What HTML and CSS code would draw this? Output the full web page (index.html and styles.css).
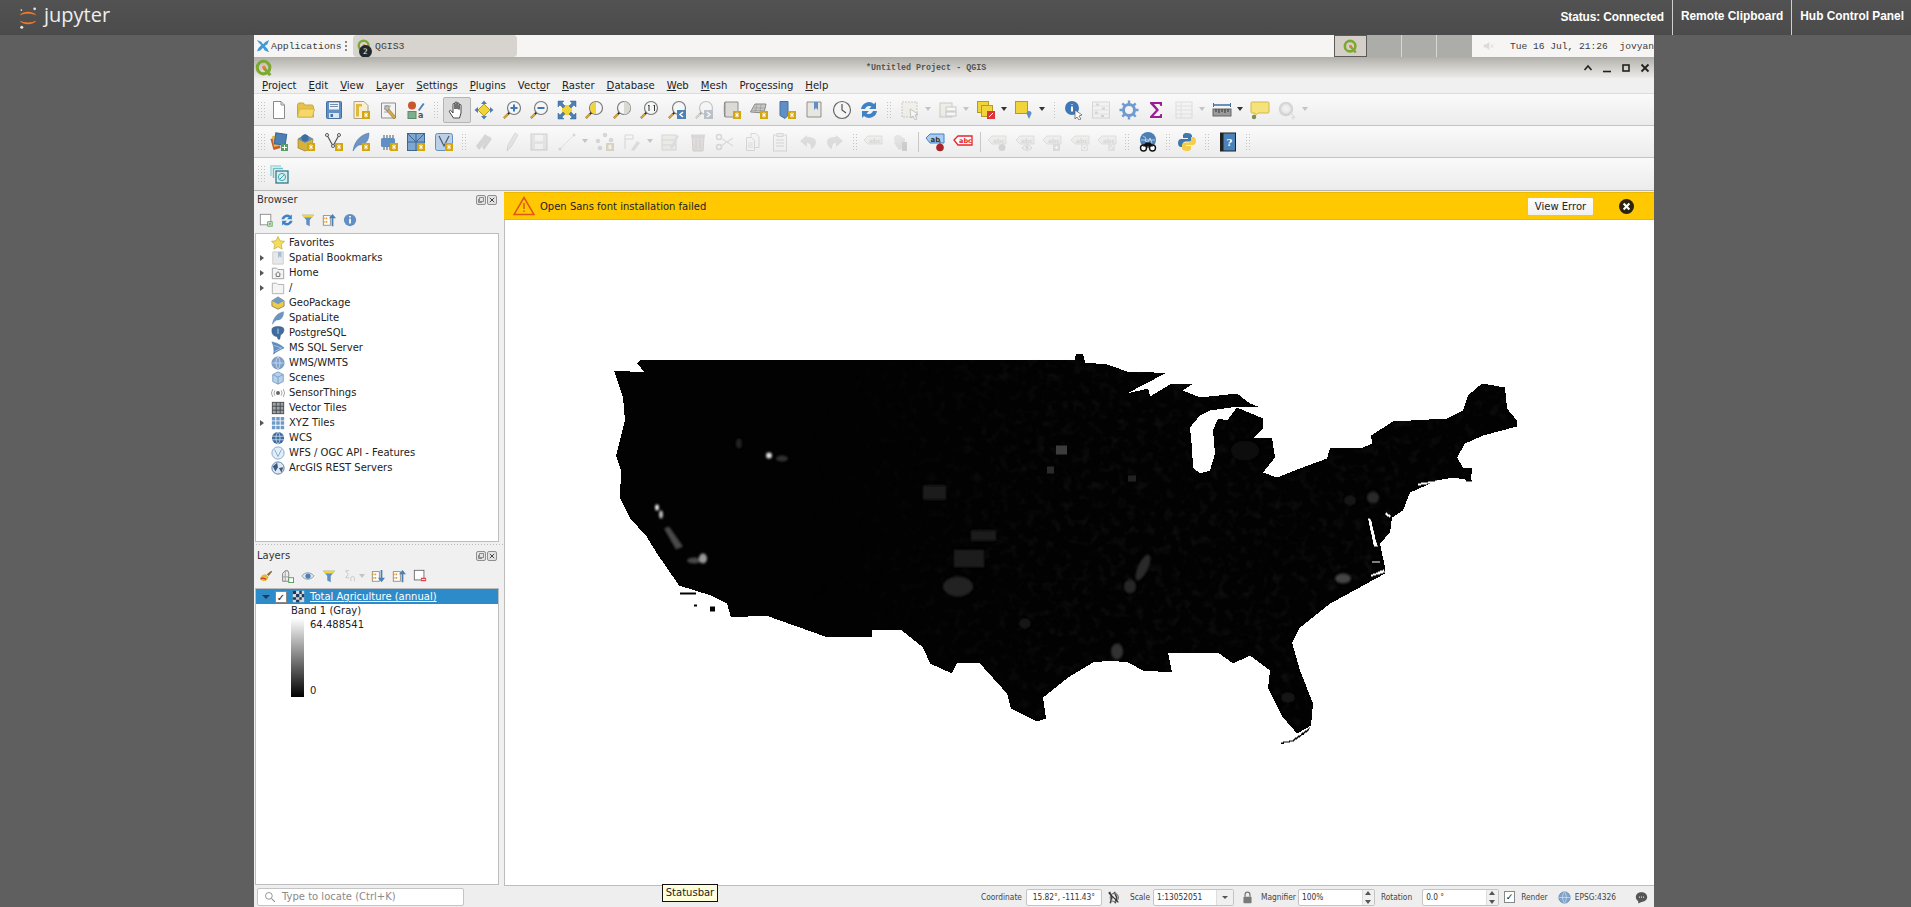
FILE: index.html
```html
<!DOCTYPE html>
<html lang="en">
<head>
    <meta charset="UTF-8">
    <title>QGIS3 - Jupyter Desktop</title>
    <link rel="stylesheet" href="styles.css">
</head>
<body>
    <!-- icon sheet -->
    <svg class="sheet" xmlns="http://www.w3.org/2000/svg">
        <symbol id="badge" viewBox="0 0 20 20"><rect x="11" y="11" width="8" height="8" fill="#d3a50f"/><path d="M15 12.5v5M13 13.5l4 3M17 13.5l-4 3" stroke="#fff" stroke-width="1"/></symbol>
        <symbol id="qgis" viewBox="0 0 20 20"><circle cx="9.5" cy="9.5" r="7" fill="none" stroke="#7da834" stroke-width="3.4"/><path d="M10 10l7 8" stroke="#7da834" stroke-width="3.4"/><circle cx="10" cy="9.5" r="2" fill="#ee7b22"/></symbol>
        <symbol id="new" viewBox="0 0 20 20"><path d="M4.500 1.500h7.500l3.500 3.500v13.500h-11z" fill="#fff" stroke="#8b8b8b"/><path d="M12 1.500v3.500h3.500" fill="none" stroke="#8b8b8b"/></symbol>
        <symbol id="open" viewBox="0 0 20 20"><path d="M1.500 5l1-2h5l1 2h8l1 2v10h-16z" fill="#e6c24a" stroke="#c9a63c"/><path d="M1.500 17l2-8h15l-2 8z" fill="#f6d868" stroke="#d7b64a"/></symbol>
        <symbol id="save" viewBox="0 0 20 20"><rect x="2.500" y="1.500" width="15" height="17" rx="1" fill="#5f8fc4" stroke="#44709f"/><rect x="5" y="2.500" width="10" height="7" fill="#eef2f6"/><path d="M6 4.500h8M6 6.500h8" stroke="#7a8ea5"/><rect x="5" y="13" width="10" height="5" fill="#dfe5ec"/><rect x="6.500" y="14" width="2.500" height="3" fill="#44709f"/></symbol>
        <symbol id="newlayout" viewBox="0 0 20 20"><path d="M3 1.500h10l4 4v13h-14z" fill="#f7efd6" stroke="#a9a28c"/><path d="M5 4h6v2.500h-3v10h-3z" fill="#e2b93d"/><use href="#badge"/></symbol>
        <symbol id="layoutmgr" viewBox="0 0 20 20"><path d="M2.500 3h14v15h-14z" fill="#f3f3f3" stroke="#8f8f8f"/><path d="M5 6h7M5 9h5M5 12h4" stroke="#9ab"/><path d="M9 8l8 9-2 2-8-9z" fill="#d3a94a" stroke="#8b7130" stroke-width=".6"/><circle cx="8" cy="8" r="2.400" fill="#bbb" stroke="#777" stroke-width=".6"/></symbol>
        <symbol id="style" viewBox="0 0 20 20"><circle cx="6" cy="5.500" r="4" fill="#c9582f"/><path d="M12 10l5-7 1.500 1-5 7z" fill="#4c7fb4"/><rect x="2" y="11.500" width="8" height="7" fill="#7fae8f" stroke="#5d8a6d"/></symbol>
        <symbol id="hand" viewBox="0 0 20 20"><path d="M6.500 18l-4-6c-.8-1.400 1-2.300 2-1l1.500 2V4.500c0-1.500 2-1.500 2 0V9V3c0-1.500 2-1.500 2 0v6V3.800c0-1.500 2-1.500 2 0V9.500V5.500c0-1.500 2-1.500 2 0V13l-1.500 5z" fill="#fff" stroke="#333" stroke-width=".9"/></symbol>
        <symbol id="panto" viewBox="0 0 20 20"><path d="M10 4l6 6-6 6-6-6z" fill="#f1d33a" stroke="#b79b1e"/><path d="M10 .5l3 3.500h-6zM10 19.500l3-3.500h-6zM.5 10l3.500-3v6zM19.500 10l-3.500-3v6z" fill="#4c7fb4"/></symbol>
        <symbol id="lens" viewBox="0 0 20 20"><path d="M8 12l-6 6" stroke="#222" stroke-width="2"/><path d="M6 14l-4 4" stroke="#e0a92e" stroke-width="2"/><circle cx="12" cy="8" r="6.500" fill="#f4f6f8" stroke="#7a7a7a" stroke-width="1.200"/></symbol>
        <symbol id="zoomin" viewBox="0 0 20 20"><use href="#lens"/><path d="M8.500 8h7M12 4.500v7" stroke="#3e77b5" stroke-width="2"/></symbol>
        <symbol id="zoomout" viewBox="0 0 20 20"><use href="#lens"/><path d="M8.500 8h7" stroke="#3e77b5" stroke-width="2"/></symbol>
        <symbol id="full" viewBox="0 0 20 20"><rect x="5" y="5" width="10" height="10" fill="#f1d33a"/><path d="M1 1h6L5 3l3 3-2 2-3-3-2 2zM19 1v6l-2-2-3 3-2-2 3-3-2-2zM19 19h-6l2-2-3-3 2-2 3 3 2-2zM8 14l-3 3 2 2H1v-6l2 2 3-3z" fill="#4c7fb4" stroke="#3a6796" stroke-width=".5"/></symbol>
        <symbol id="zoomsel" viewBox="0 0 20 20"><use href="#lens"/><path d="M12 2a6 6 0 0 0 0 12z" fill="#f1d33a"/></symbol>
        <symbol id="zoomlayer" viewBox="0 0 20 20"><use href="#lens"/><path d="M12 1.500a6.500 6.500 0 0 1 0 13z" fill="#d9d9d2"/></symbol>
        <symbol id="zoom11" viewBox="0 0 20 20"><use href="#lens"/><path d="M9 6l1-1v6M12.200 6.500v.1M12.200 9.500v.1M14.500 6l1-1v6" fill="none" stroke="#333" stroke-width="1"/></symbol>
        <symbol id="zoomlast" viewBox="0 0 20 20"><use href="#lens"/><rect x="10" y="10" width="9" height="9" fill="#4c7fb4"/><path d="M16 12l-3 2.500 3 2.500" fill="none" stroke="#fff" stroke-width="1.500"/></symbol>
        <symbol id="zoomnext" viewBox="0 0 20 20"><use href="#lens"/><rect x="10" y="10" width="9" height="9" fill="#4c7fb4"/><path d="M13 12l3 2.500-3 2.500" fill="none" stroke="#fff" stroke-width="1.500"/></symbol>
        <symbol id="newmap" viewBox="0 0 20 20"><path d="M3 2h13v15H3z" fill="#dcdad4" stroke="#8f8f8f"/><path d="M3 2c-1 0-1 15 0 15" fill="#aaa" stroke="#888"/><use href="#badge"/></symbol>
        <symbol id="new3d" viewBox="0 0 20 20"><path d="M1.500 12L6 4h11l-2 9z" fill="#c8c8c4" stroke="#888"/><path d="M5 8h11M3.500 10.500h12M8 4l-2 9M12 4l-1 9" stroke="#999" stroke-width=".7"/><use href="#badge"/></symbol>
        <symbol id="bookmark" viewBox="0 0 20 20"><path d="M3 1.500h8v14l-3 3-5-3z" fill="#5f8fc4" stroke="#44709f"/><use href="#badge"/></symbol>
        <symbol id="bookmarks" viewBox="0 0 20 20"><path d="M3 2h14v15H3z" fill="#e8e6e1" stroke="#8f8f8f"/><path d="M10 2h4v8l-2-2-2 2z" fill="#5f8fc4"/></symbol>
        <symbol id="clock" viewBox="0 0 20 20"><circle cx="10" cy="10" r="8.500" fill="#f5f5f5" stroke="#666" stroke-width="1.200"/><path d="M10 4v6l4 3" fill="none" stroke="#555" stroke-width="1.200"/></symbol>
        <symbol id="refresh" viewBox="0 0 20 20"><path d="M2 9a8 8 0 0 1 13-5l2-2v7h-7l2.500-2.500A4.500 4.500 0 0 0 6 9z" fill="#3f83c6"/><path d="M18 11a8 8 0 0 1-13 5l-2 2v-7h7l-2.500 2.500A4.500 4.500 0 0 0 14 11z" fill="#3f83c6"/></symbol>
        <symbol id="selrect" viewBox="0 0 20 20"><rect x="2" y="2" width="15" height="15" fill="#efe9b0" stroke="#888" stroke-dasharray="2 1"/><path d="M10 9l8 5-3 1 2 4-2 1-2-4-2 2z" fill="#fff" stroke="#555" stroke-width=".7"/></symbol>
        <symbol id="selvalue" viewBox="0 0 20 20"><rect x="2" y="3" width="12" height="14" fill="#f1e7a8" stroke="#888"/><rect x="8" y="7" width="10" height="4" fill="#fff" stroke="#888"/><rect x="8" y="12" width="10" height="4" fill="#fff" stroke="#888"/></symbol>
        <symbol id="desel" viewBox="0 0 20 20"><rect x="1.500" y="1.500" width="11" height="11" fill="#f1d33a" stroke="#b79b1e"/><rect x="5.500" y="5.500" width="11" height="11" fill="#f1d33a" stroke="#b79b1e"/><rect x="11" y="11" width="8" height="8" fill="#d9363e"/><path d="M13 17l4-4" stroke="#fff"/></symbol>
        <symbol id="selloc" viewBox="0 0 20 20"><rect x="1.500" y="1.500" width="12" height="12" fill="#f1d33a" stroke="#b79b1e"/><path d="M15 11a2.500 2.500 0 0 1 2.500 2.500L15 19l-2.500-5.500A2.500 2.500 0 0 1 15 11z" fill="#5f8fc4"/></symbol>
        <symbol id="identify" viewBox="0 0 20 20"><circle cx="8" cy="8" r="7" fill="#3f78b7"/><path d="M8 4v.6M8 6.500v5" stroke="#fff" stroke-width="2"/><path d="M11 10l7 5-3 1 2 3-2 1-2-3-2 2z" fill="#fff" stroke="#555" stroke-width=".7"/></symbol>
        <symbol id="abacus" viewBox="0 0 20 20"><rect x="1.500" y="2" width="17" height="16" fill="#f0f0ec" stroke="#aaa"/><path d="M1.500 6h17M1.500 10h17M1.500 14h17" stroke="#c7c7c0"/><path d="M5 4.500h3M11 8.500h3M4 12.500h3M10 16h3" stroke="#a5a59c" stroke-width="2"/></symbol>
        <symbol id="gear" viewBox="0 0 20 20"><circle cx="10" cy="10" r="5.500" fill="none" stroke="#6f9bd1" stroke-width="3"/><path d="M10 .5v4M10 15.500v4M.5 10h4M15.500 10h4M3.300 3.300l2.800 2.800M13.900 13.900l2.800 2.800M3.300 16.700l2.800-2.800M13.900 6.100l2.800-2.800" stroke="#6f9bd1" stroke-width="2.400"/></symbol>
        <symbol id="sigma" viewBox="0 0 20 20"><path d="M4 2h12v4h-1.500l-1-2H8l5 6-5.500 6h6l1-2H16v4H4v-1.500l6-6.500-6-6.500z" fill="#9a1d96"/></symbol>
        <symbol id="table" viewBox="0 0 20 20"><rect x="2" y="2" width="16" height="16" fill="#f2f2f2" stroke="#bbb"/><path d="M2 6h16M2 10h16M2 14h16M7 2v16" stroke="#c5c5c5"/></symbol>
        <symbol id="ruler" viewBox="0 0 20 20"><path d="M1 5h18" stroke="#3f6d9f" stroke-width="1.500"/><path d="M1.500 3v4M18.500 3v4" stroke="#3f6d9f"/><rect x="1" y="9" width="18" height="7" fill="#9a9a9a" stroke="#666"/><path d="M4 9v3M7 9v4M10 9v3M13 9v4M16 9v3" stroke="#333"/></symbol>
        <symbol id="tip" viewBox="0 0 20 20"><path d="M2 2h16c1 0 1 1 1 1v9c0 1-1 1-1 1H8l-3 3v-3H2s-1 0-1-1V3s0-1 1-1z" fill="#f6e27a" stroke="#d2b94c"/><circle cx="4" cy="17" r="2.200" fill="#7c8f52"/></symbol>
        <symbol id="gearcursor" viewBox="0 0 20 20"><circle cx="9" cy="9" r="6" fill="#ddd" stroke="#aaa" stroke-width="2.500"/><circle cx="9" cy="9" r="2.500" fill="#eee"/><path d="M12 12l6 5-3 .5 1.500 2" fill="#eee" stroke="#aaa"/></symbol>
        <symbol id="newgpkg" viewBox="0 0 20 20"><path d="M2 7l7-4 8 4-1 9-7 3-7-3z" fill="#d7b23a" stroke="#8a7020" stroke-width=".6"/><path d="M2 7l7 4 8-4-8-5z" fill="#5f8fc4"/></symbol>
        <symbol id="addlayer" viewBox="0 0 20 20"><path d="M1.500 7l7-2 3 11-7 2z" fill="#c9582f"/><path d="M3 4l9-1 2 10-9 2z" fill="#e8b93a"/><rect x="6" y="1.500" width="11" height="11" fill="#4c7fb4" stroke="#3a6796" transform="rotate(8 11 7)"/><rect x="12" y="12" width="7" height="7" fill="#5a9a63"/><path d="M15.500 13v5M13 15.500h5" stroke="#fff"/></symbol>
        <symbol id="addgpkg" viewBox="0 0 20 20"><use href="#newgpkg"/><circle cx="9" cy="6" r="3.500" fill="#3f6d9f"/><use href="#badge"/></symbol>
        <symbol id="addvec" viewBox="0 0 20 20"><path d="M3 3l6 11 6-11" fill="none" stroke="#555" stroke-width="1.200"/><circle cx="3" cy="3" r="1.500" fill="#fff" stroke="#555"/><circle cx="9" cy="14" r="1.500" fill="#fff" stroke="#555"/><circle cx="15" cy="3" r="1.500" fill="#fff" stroke="#555"/><use href="#badge"/></symbol>
        <symbol id="feather" viewBox="0 0 20 20"><path d="M2 19C3 11 8 3 18 1c0 6-2 12-10 12-2 1-4 3-6 6z" fill="#6d94c2" stroke="#4a74a6" stroke-width=".5"/></symbol>
        <symbol id="addspat" viewBox="0 0 20 20"><use href="#feather"/><use href="#badge"/></symbol>
        <symbol id="addchip" viewBox="0 0 20 20"><rect x="2" y="6" width="14" height="9" rx="1.500" fill="#5f8fc4"/><path d="M5 3v3M8 3v3M11 3v3M14 3v3M5 15v3M8 15v3M11 15v3" stroke="#555"/><use href="#badge"/></symbol>
        <symbol id="addvl" viewBox="0 0 20 20"><rect x="1.500" y="1.500" width="17" height="17" fill="#7fa6cf" stroke="#3a6796"/><path d="M1.500 10h17M10 1.500v17M1.500 1.500l8.500 8.500 8.500-8.500" fill="none" stroke="#3a6796"/><use href="#badge"/></symbol>
        <symbol id="addv" viewBox="0 0 20 20"><rect x="1.500" y="1.500" width="17" height="17" rx="2" fill="#b9d0e8" stroke="#5f8fc4"/><path d="M5 4l5 10 5-10" fill="none" stroke="#556" stroke-width="1.200"/><use href="#badge"/></symbol>
        <symbol id="pencils" viewBox="0 0 20 20"><path d="M5 18l-3-4L11 2l4 3zM10 18L8 15l7-11 3 3z" fill="#aaa"/></symbol>
        <symbol id="pencil" viewBox="0 0 20 20"><path d="M5 19l1-6L13 1l3 2-7 12z" fill="#ccc" stroke="#aaa"/></symbol>
        <symbol id="savelay" viewBox="0 0 20 20"><rect x="2" y="2" width="16" height="16" fill="#ccc" stroke="#999"/><rect x="6" y="3" width="8" height="6" fill="#eee"/><rect x="6" y="12" width="8" height="5" fill="#eee"/></symbol>
        <symbol id="line" viewBox="0 0 20 20"><path d="M3 17L17 3" stroke="#aaa" stroke-dasharray="2 1"/><circle cx="3" cy="17" r="1.500" fill="#aaa"/><circle cx="17" cy="3" r="1.500" fill="#aaa"/></symbol>
        <symbol id="nodes" viewBox="0 0 20 20"><circle cx="3" cy="9" r="2.300" fill="#aaa"/><circle cx="10" cy="3" r="2.300" fill="#aaa"/><circle cx="16" cy="8" r="2.300" fill="#aaa"/><circle cx="5" cy="16" r="2.300" fill="#aaa"/><use href="#badge"/></symbol>
        <symbol id="vertex" viewBox="0 0 20 20"><path d="M3 3h8v4H3zM3 7v10" fill="none" stroke="#aaa"/><path d="M9 18l6-9 3 2-6 8z" fill="#bbb"/></symbol>
        <symbol id="editattr" viewBox="0 0 20 20"><rect x="2" y="3" width="14" height="15" fill="#e1ddc8" stroke="#aaa"/><path d="M2 8h14M2 13h14" stroke="#aaa"/><path d="M10 16l7-13 2 1-7 13z" fill="#bbb"/></symbol>
        <symbol id="trash" viewBox="0 0 20 20"><path d="M4 5h12l-1 14H5z" fill="#c9bbb5" stroke="#a79a94"/><rect x="3" y="2.500" width="14" height="2.500" fill="#b9aba5"/><path d="M8 7v10M12 7v10" stroke="#a79a94"/></symbol>
        <symbol id="scissors" viewBox="0 0 20 20"><circle cx="4" cy="5" r="2.500" fill="none" stroke="#aaa" stroke-width="1.500"/><circle cx="4" cy="15" r="2.500" fill="none" stroke="#aaa" stroke-width="1.500"/><path d="M6 6l12 8M6 14l12-8" stroke="#bbb" stroke-width="1.500"/></symbol>
        <symbol id="copy" viewBox="0 0 20 20"><path d="M8 1.500h5l3 3v11H8z" fill="#f2f2f2" stroke="#aaa"/><path d="M3.500 5.500h5l3 3v10h-8z" fill="#f2f2f2" stroke="#aaa"/><path d="M5 11h5M5 13h5M5 15h5" stroke="#bbb"/></symbol>
        <symbol id="paste" viewBox="0 0 20 20"><rect x="3.500" y="3" width="13" height="16" fill="#eee" stroke="#aaa"/><rect x="7" y="1.500" width="6" height="3" fill="#ddd" stroke="#aaa"/><path d="M6 8h8M6 11h8M6 14h8" stroke="#aaa"/></symbol>
        <symbol id="undo" viewBox="0 0 20 20"><path d="M9 3L2 9l7 6v-4c3 0 4 2 4 6 3-1 5-4 5-7 0-4-4-5-9-5z" fill="#bbb"/></symbol>
        <symbol id="redo" viewBox="0 0 20 20"><path d="M11 3l7 6-7 6v-4c-3 0-4 2-4 6-3-1-5-4-5-7 0-4 4-5 9-5z" fill="#bbb"/></symbol>
        <symbol id="abc" viewBox="0 0 20 20"><path d="M1 8l4-4h14v8H5z" fill="#e6e4dc" stroke="#bbb"/></symbol>
        <symbol id="pin" viewBox="0 0 20 20"><path d="M3 11l6-7 5 3-1 9-5 2z" fill="#b9c6b4"/><rect x="11" y="10" width="5" height="9" fill="#999"/><circle cx="7" cy="7" r="4" fill="#ccc"/></symbol>
        <symbol id="abblue" viewBox="0 0 20 20"><path d="M1 6l4-4h14v9H5z" fill="#a9cdf0" stroke="#3f83c6"/><path d="M15 9v3" stroke="#555"/><circle cx="15" cy="15.500" r="3.800" fill="#a8232a"/></symbol>
        <symbol id="abcred" viewBox="0 0 20 20"><path d="M1 8l4-4h14v9H5z" fill="#fff" stroke="#e6232a" stroke-width="1.300"/></symbol>
        <symbol id="abcpin" viewBox="0 0 20 20"><use href="#abc"/><circle cx="15" cy="15.500" r="3.500" fill="#aaa"/></symbol>
        <symbol id="abceye" viewBox="0 0 20 20"><use href="#abc"/><path d="M7 16c3-4 7-4 10 0-3 3-7 3-10 0z" fill="#eee" stroke="#aaa"/><circle cx="12" cy="15.500" r="1.500" fill="#aaa"/></symbol>
        <symbol id="abcmove" viewBox="0 0 20 20"><use href="#abc"/><rect x="11" y="12" width="7" height="7" fill="#bbb"/><path d="M12.500 15.500h3M14 14l2 1.500-2 1.500" stroke="#fff" fill="none"/></symbol>
        <symbol id="abcrot" viewBox="0 0 20 20"><use href="#abc"/><rect x="11" y="12" width="7" height="7" fill="#ccc"/><circle cx="14.500" cy="15.500" r="2" fill="none" stroke="#fff"/></symbol>
        <symbol id="abcedit" viewBox="0 0 20 20"><use href="#abc"/><rect x="11" y="12" width="7" height="7" fill="#ccc"/><path d="M12.500 17.500l4-4" stroke="#fff"/></symbol>
        <symbol id="geosearch" viewBox="0 0 20 20"><circle cx="10" cy="8" r="8" fill="#4c7fb4"/><path d="M5 4l3 2-1 3 3 1 2-4 2 5M3 8h14" fill="none" stroke="#cfe0f1" stroke-width=".8"/><circle cx="5.500" cy="16" r="3" fill="#fff" stroke="#111" stroke-width="1.400"/><circle cx="14.500" cy="16" r="3" fill="#fff" stroke="#111" stroke-width="1.400"/><path d="M6 12.500l2-2h4l2 2 1 2H5z" fill="#111"/></symbol>
        <symbol id="python" viewBox="0 0 20 20"><path d="M10 1C6 1 6 3 6 4v2h5v1H4C2 7 1 9 1 11s1 4 3 4h2v-3c0-1.500 1-2.500 2.500-2.500h4C14 9.500 15 8.500 15 7V4c0-2-2-3-5-3z" fill="#3f78ad"/><path d="M10 19c4 0 4-2 4-3v-2H9v-1h7c2 0 3-2 3-4s-1-4-3-4h-2v3c0 1.500-1 2.500-2.500 2.500h-4C6 10.500 5 11.500 5 13v3c0 2 2 3 5 3z" fill="#f4cd4a"/></symbol>
        <symbol id="help" viewBox="0 0 20 20"><rect x="2.500" y="1" width="15" height="18" fill="#4b82b8" stroke="#222"/><rect x="2.500" y="1" width="3" height="18" fill="#222"/></symbol>
        <symbol id="overview" viewBox="0 0 20 20"><path d="M2 12V2h10" fill="none" stroke="#9fd6da" stroke-width="1.500"/><path d="M4.500 14V4.500H14" fill="none" stroke="#6fc0c8" stroke-width="1.500"/><rect x="7" y="7" width="12" height="12" fill="#d9eef1" stroke="#357a86" stroke-width="1.300"/><circle cx="13" cy="13" r="3.600" fill="none" stroke="#3fa7b0"/><path d="M10.500 15.500l5-5" stroke="#3fa7b0"/></symbol>
        <symbol id="newdb" viewBox="0 0 16 16"><rect x="1.500" y="1.500" width="12" height="12" fill="#fff" stroke="#888"/><rect x="10" y="10" width="5" height="5" fill="#fff" stroke="#4a9a4a"/><path d="M12.500 11v3M11 12.500h3" stroke="#4a9a4a"/></symbol>
        <symbol id="filter" viewBox="0 0 16 16"><path d="M1 2h14l-5 6v7l-4-2V8z" fill="#5f8fc4"/><path d="M1 2h14l-2 3H3z" fill="#f1d33a"/></symbol>
        <symbol id="collapse" viewBox="0 0 16 16"><rect x="1.500" y="3" width="8" height="11" fill="#fff" stroke="#888"/><path d="M1 6h2M1 10h2M4 6h2M4 10h2" stroke="#e69a2e" stroke-width="2"/><path d="M11 15V6H8l4-5 4 5h-3v9z" fill="#4c7fb4"/></symbol>
        <symbol id="expand" viewBox="0 0 16 16"><rect x="1.500" y="3" width="8" height="11" fill="#fff" stroke="#888"/><path d="M1 6h2M1 10h2M4 6h2M4 10h2" stroke="#e69a2e" stroke-width="2"/><path d="M11 1v9H8l4 5 4-5h-3V1z" fill="#4c7fb4"/></symbol>
        <symbol id="info" viewBox="0 0 16 16"><circle cx="8" cy="8" r="7" fill="#5f8fc4"/><path d="M8 3.500v1.500M8 6.500V12" stroke="#fff" stroke-width="2"/></symbol>
        <symbol id="star" viewBox="0 0 16 16"><path d="M8 .5l2.300 5 5.200.6-3.900 3.500 1.100 5.400L8 12.300 3.300 15l1.100-5.400L.5 6.100l5.200-.6z" fill="#f4de5e" stroke="#c3a92e" stroke-width=".8"/></symbol>
        <symbol id="bm" viewBox="0 0 16 16"><path d="M2 1h12v14H2z" fill="#e8e8e8" stroke="#ccc"/><path d="M8 1h4v7l-2-2-2 2z" fill="#a9bdd6"/></symbol>
        <symbol id="home" viewBox="0 0 16 16"><path d="M1.500 2.500h5l1.500 1.500h6.500v10.500h-13z" fill="#f4f4f4" stroke="#999"/><path d="M5 9.500L8 6.500l3 3M6 9v3h4V9" fill="none" stroke="#666"/></symbol>
        <symbol id="folder" viewBox="0 0 16 16"><path d="M1.500 2.500h5l1.500 1.500h6.500v10.500h-13z" fill="#f4f4f4" stroke="#aaa"/></symbol>
        <symbol id="gpkg" viewBox="0 0 16 16"><path d="M1 5.500L8 1l7 4.500v6L8 15l-7-3.500z" fill="#f0cb45" stroke="#555" stroke-width=".7"/><path d="M1 5.500L8 9.500l7-4L8 1z" fill="#6f9bc9"/></symbol>
        <symbol id="pg" viewBox="0 0 16 16"><path d="M2 2c3-2 9-2 12 0 2 3 0 7-3 8l-1 5H8l-1-3c-3 0-6-2-6-6 0-2 0-3 1-4z" fill="#3f6d9f" stroke="#2d4d70" stroke-width=".5"/><path d="M8 3v6" stroke="#cfdcea"/></symbol>
        <symbol id="mssql" viewBox="0 0 16 16"><path d="M1 1c5 1 10 3 14 7-4 2-9 4-12 7 1-5 0-10-2-14z" fill="#5f8fc4" stroke="#3f6d9f" stroke-width=".5"/><path d="M3 5l9 3-8 4" fill="none" stroke="#cfdcea" stroke-width=".7"/></symbol>
        <symbol id="globe" viewBox="0 0 16 16"><circle cx="8" cy="8" r="7" fill="#7fa3ca" stroke="#4a74a6" stroke-width=".7"/><path d="M8 1c-3 3-3 11 0 14M8 1c3 3 3 11 0 14M1 8h14" fill="none" stroke="#e8eff6" stroke-width=".7"/></symbol>
        <symbol id="cube" viewBox="0 0 16 16"><path d="M8 1l6 3v8l-6 3-6-3V4z" fill="#b9d0e8" stroke="#6f9bc9"/><path d="M2 4l6 3 6-3M8 7v8" fill="none" stroke="#6f9bc9"/></symbol>
        <symbol id="sensor" viewBox="0 0 16 16"><circle cx="8" cy="8" r="2.300" fill="#666"/><path d="M4.500 5a5 5 0 0 0 0 6M11.500 5a5 5 0 0 1 0 6M2 3.500a8 8 0 0 0 0 9M14 3.500a8 8 0 0 1 0 9" fill="none" stroke="#999"/></symbol>
        <symbol id="vtiles" viewBox="0 0 16 16"><rect x="1.500" y="1.500" width="13" height="13" fill="#9aa4ad" stroke="#444"/><path d="M1.500 6h13M1.500 10.500h13M6 1.500v13M10.500 1.500v13" stroke="#444"/></symbol>
        <symbol id="xyz" viewBox="0 0 16 16"><path d="M1 1h4v4H1zM6 1h4v4H6zM11 1h4v4h-4zM1 6h4v4H1zM6 6h4v4H6zM11 6h4v4h-4zM1 11h4v4H1zM6 11h4v4H6zM11 11h4v4h-4z" fill="#6f9bc9"/></symbol>
        <symbol id="wcs" viewBox="0 0 16 16"><circle cx="8" cy="8" r="7" fill="#3f6d9f"/><path d="M1 6h14M1 10h14M8 1c-3 3-3 11 0 14M8 1c3 3 3 11 0 14" fill="none" stroke="#dfe9f3" stroke-width=".8"/></symbol>
        <symbol id="wfs" viewBox="0 0 16 16"><circle cx="8" cy="8" r="7" fill="#e3edf6" stroke="#7fa3ca"/><path d="M4 4l4 8 4-8" fill="none" stroke="#7fa3ca"/></symbol>
        <symbol id="arcgis" viewBox="0 0 16 16"><circle cx="8" cy="8" r="7" fill="#dfe9f3" stroke="#4a74a6"/><path d="M2 6l5-4 1 5-3 5zM9 8l5-1-2 6z" fill="#3c5c7d"/></symbol>
        <symbol id="float" viewBox="0 0 10 10"><rect x=".5" y=".5" width="9" height="9" rx="1.500" fill="#e4e4e4" stroke="#777" stroke-width=".8"/><path d="M3.500 2.500h4v4h-4zM2.500 4v3.500H6" fill="none" stroke="#666" stroke-width=".7"/></symbol>
        <symbol id="closep" viewBox="0 0 10 10"><rect x=".5" y=".5" width="9" height="9" rx="1.500" fill="#e4e4e4" stroke="#777" stroke-width=".8"/><path d="M2.800 2.800l4.400 4.400M7.200 2.800l-4.400 4.400" stroke="#444" stroke-width="1"/></symbol>
        <symbol id="brush" viewBox="0 0 16 16"><path d="M1 12c1-4 3-6 7-6l3 3c-1 3-3 5-6 5z" fill="#e6b93a"/><path d="M2 11c2-1 4-1 6 1" stroke="#c9352f" stroke-width="1.500" fill="none"/><path d="M9 6l5-4 1 1-4 5z" fill="#8a6a3a"/></symbol>
        <symbol id="group" viewBox="0 0 16 16"><path d="M3 14V5l3-3h3l1 3v9z" fill="#eee" stroke="#777"/><path d="M3 9h7M6 2v12" stroke="#999"/><rect x="10" y="10" width="5.500" height="5.500" fill="#fff" stroke="#4a9a4a"/></symbol>
        <symbol id="eye" viewBox="0 0 16 16"><path d="M1 8c3-5 10-5 14 0-4 5-11 5-14 0z" fill="#dde4ec" stroke="#8b9aab"/><circle cx="8" cy="8" r="3" fill="#4c7fb4"/></symbol>
        <symbol id="epsilon" viewBox="0 0 16 16"><path d="M7 2H3l3 4-3 4h4" fill="none" stroke="#bbb"/><path d="M9 14v-4c0-2 4-2 4 0v4" fill="none" stroke="#bbb"/></symbol>
        <symbol id="removel" viewBox="0 0 16 16"><rect x="1.500" y="1.500" width="11" height="11" fill="#fff" stroke="#666"/><rect x="9" y="10" width="6" height="4" fill="#e0454b"/><path d="M10 12h4" stroke="#fff"/></symbol>
        <symbol id="raster" viewBox="0 0 16 16"><rect x="1" y="1" width="14" height="14" fill="#d8d8d8"/><path d="M1 1h4v4H1zM9 1h3v4H9zM5 5h4v4H5zM12 5h3v4h-3zM1 9h4v3H1zM9 9h3v3H9zM5 12h4v3H5z" fill="#1f3a5c"/></symbol>
        <symbol id="search" viewBox="0 0 16 16"><circle cx="6.500" cy="6.500" r="4.500" fill="none" stroke="#8a8a8a" stroke-width="1.200"/><path d="M10 10l4.500 4.500" stroke="#8a8a8a" stroke-width="1.400"/></symbol>
        <symbol id="crs" viewBox="0 0 16 16"><path d="M3 1l3 7-2 7M9 1l3 7-2 7" fill="none" stroke="#444" stroke-width="2"/><circle cx="9" cy="8" r="5" fill="none" stroke="#777" stroke-width="1.500"/><path d="M2 2l12 12" stroke="#333" stroke-width="1.500"/></symbol>
        <symbol id="lock" viewBox="0 0 16 16"><path d="M5 7V4.500a3 3 0 0 1 6 0V7" fill="none" stroke="#777" stroke-width="1.500"/><rect x="3" y="7" width="10" height="8" rx="1" fill="#7a7a7a"/></symbol>
        <symbol id="msg" viewBox="0 0 16 16"><path d="M8 1.500c4 0 7 2.500 7 6s-3 6-7 6l-4 2v-3c-2-1-3-3-3-5 0-3.500 3-6 7-6z" fill="#555"/><path d="M5 7.500h1M7.500 7.500h1M10 7.500h1" stroke="#fff" stroke-width="1.500"/></symbol>
    </svg>

    <header class="navbar">
        <div class="brand">
            <svg class="brand-logo" viewBox="0 0 24 28">
                <path d="M2 11c3-6 17-6 20 0-5-3-15-3-20 0z" fill="#f37726"/>
                <path d="M2 17c3 6 17 6 20 0-5 3-15 3-20 0z" fill="#f37726"/>
                <circle cx="20" cy="3" r="1.600" fill="#e8e8e8"/>
                <circle cx="4" cy="4.500" r="1" fill="#e8e8e8"/>
                <circle cx="4.500" cy="25" r="1.800" fill="#e8e8e8"/>
            </svg>
            <span class="brand-name">jupyter</span>
        </div>
        <nav class="nav-links">
            <span class="nav-status">Status: Connected</span>
            <a class="nav-link">Remote Clipboard</a>
            <a class="nav-link">Hub Control Panel</a>
        </nav>
    </header>

    <main class="desktop">
        <div class="taskbar">
            <svg class="xfce" viewBox="0 0 16 16"><path d="M1 1l5 2 2 3 3-3 4-2-2 5-3 2 3 3 2 4-5-2-2-3-3 3-4 1 2-4 3-3-3-3z" fill="#3f9bd6"/></svg>
            <span class="mono apps">Applications</span>
            <span class="grip"></span>
            <div class="task">
                <svg class="task-ico"><use href="#qgis"/></svg>
                <span class="task-badge">2</span>
                <span class="mono">QGIS3</span>
            </div>
            <div class="tray">
                <div class="pager-on"><svg class="pager-ico"><use href="#qgis"/></svg></div>
                <div class="pager"></div>
                <div class="pager"></div>
                <div class="pager"></div>
                <div class="clock-area">
                    <svg class="speaker" viewBox="0 0 14 12"><path d="M1 4h3l4-3v10L4 8H1z" fill="#dcdad7"/><path d="M10 4l3 4M13 4l-3 4" stroke="#dcdad7"/></svg>
                    <span class="mono clock">Tue 16 Jul, 21:26&nbsp; jovyan</span>
                </div>
            </div>
        </div>

        <div class="titlebar">
            <svg class="win-ico"><use href="#qgis"/></svg>
            <span class="mono win-title">*Untitled Project - QGIS</span>
            <div class="win-btns">
                <svg viewBox="0 0 10 10"><path d="M1.500 7L5 3l3.500 4" fill="none" stroke="#222" stroke-width="1.600"/></svg>
                <svg viewBox="0 0 10 10"><path d="M1 8.500h8" stroke="#222" stroke-width="1.600"/></svg>
                <svg viewBox="0 0 10 10"><rect x="2" y="2" width="6" height="6" fill="none" stroke="#222" stroke-width="1.600"/></svg>
                <svg viewBox="0 0 10 10"><path d="M1.500 1.500l7 7M8.500 1.500l-7 7" stroke="#222" stroke-width="1.800"/></svg>
            </div>
        </div>

        <div class="menubar">
            <span><u>P</u>roject</span><span><u>E</u>dit</span><span><u>V</u>iew</span><span><u>L</u>ayer</span><span><u>S</u>ettings</span><span><u>P</u>lugins</span><span>Vect<u>o</u>r</span><span><u>R</u>aster</span><span><u>D</u>atabase</span><span><u>W</u>eb</span><span><u>M</u>esh</span><span>Pro<u>c</u>essing</span><span><u>H</u>elp</span>
        </div>

        <div class="tb">
            <i class="hnd"></i>
            <b><svg><use href="#new"/></svg></b><b><svg><use href="#open"/></svg></b><b><svg><use href="#save"/></svg></b><b><svg><use href="#newlayout"/></svg></b><b><svg><use href="#layoutmgr"/></svg></b><b><svg viewBox="0 0 20 20"><use href="#style"/><text x="12" y="18" class="ico-txt ico-a">a</text></svg></b>
            <i class="hnd"></i>
            <b class="on"><svg><use href="#hand"/></svg></b><b><svg><use href="#panto"/></svg></b><b><svg><use href="#zoomin"/></svg></b><b><svg><use href="#zoomout"/></svg></b><b><svg><use href="#full"/></svg></b><b><svg><use href="#zoomsel"/></svg></b><b><svg><use href="#zoomlayer"/></svg></b><b><svg><use href="#zoom11"/></svg></b><b><svg><use href="#zoomlast"/></svg></b><b class="off"><svg><use href="#zoomnext"/></svg></b><b><svg><use href="#newmap"/></svg></b><b><svg><use href="#new3d"/></svg></b><b><svg><use href="#bookmark"/></svg></b><b><svg><use href="#bookmarks"/></svg></b><b><svg><use href="#clock"/></svg></b><b><svg><use href="#refresh"/></svg></b>
            <i class="hnd"></i>
            <b class="off"><svg><use href="#selrect"/></svg></b><i class="arr dim"></i><b class="off"><svg><use href="#selvalue"/></svg></b><i class="arr dim"></i><b><svg><use href="#desel"/></svg></b><i class="arr"></i><b><svg><use href="#selloc"/></svg></b><i class="arr"></i>
            <i class="hnd thin"></i>
            <b><svg><use href="#identify"/></svg></b><b class="off"><svg><use href="#abacus"/></svg></b><b><svg><use href="#gear"/></svg></b><b><svg><use href="#sigma"/></svg></b><b class="off"><svg><use href="#table"/></svg></b><i class="arr dim"></i><b><svg><use href="#ruler"/></svg></b><i class="arr"></i><b><svg><use href="#tip"/></svg></b><b class="off"><svg><use href="#gearcursor"/></svg></b><i class="arr dim"></i>
        </div>

        <div class="tb">
            <i class="hnd"></i>
            <b><svg><use href="#addlayer"/></svg></b><b><svg><use href="#addgpkg"/></svg></b><b><svg><use href="#addvec"/></svg></b><b><svg><use href="#addspat"/></svg></b><b><svg><use href="#addchip"/></svg></b><b><svg><use href="#addvl"/></svg></b><b><svg><use href="#addv"/></svg></b>
            <i class="hnd"></i>
            <b class="off"><svg><use href="#pencils"/></svg></b><b class="off"><svg><use href="#pencil"/></svg></b><b class="off"><svg><use href="#savelay"/></svg></b><b class="off"><svg><use href="#line"/></svg></b><i class="arr dim"></i><b class="off"><svg><use href="#nodes"/></svg></b><b class="off"><svg><use href="#vertex"/></svg></b><i class="arr dim"></i><b class="off"><svg><use href="#editattr"/></svg></b><b class="off"><svg><use href="#trash"/></svg></b><b class="off"><svg><use href="#scissors"/></svg></b><b class="off"><svg><use href="#copy"/></svg></b><b class="off"><svg><use href="#paste"/></svg></b><b class="off"><svg><use href="#undo"/></svg></b><b class="off"><svg><use href="#redo"/></svg></b>
            <i class="hnd tight"></i>
            <b class="off"><svg viewBox="0 0 20 20"><use href="#abc"/><text x="6" y="10.500" class="ico-txt ico-grey">abc</text></svg></b><b class="off"><svg><use href="#pin"/></svg></b>
            <i class="vsep"></i>
            <b><svg viewBox="0 0 20 20"><use href="#abblue"/><text x="5.500" y="9.500" class="ico-txt ico-ab">ab</text></svg></b><b><svg viewBox="0 0 20 20"><use href="#abcred"/><text x="6" y="11" class="ico-txt ico-red">abc</text></svg></b>
            <i class="vsep"></i>
            <b class="off"><svg viewBox="0 0 20 20"><use href="#abcpin"/><text x="6" y="10.500" class="ico-txt ico-grey">abc</text></svg></b><b class="off"><svg viewBox="0 0 20 20"><use href="#abceye"/><text x="6" y="10.500" class="ico-txt ico-grey">abc</text></svg></b><b class="off"><svg viewBox="0 0 20 20"><use href="#abcmove"/><text x="6" y="10.500" class="ico-txt ico-grey">abc</text></svg></b><b class="off"><svg viewBox="0 0 20 20"><use href="#abcrot"/><text x="6" y="10.500" class="ico-txt ico-grey">abc</text></svg></b><b class="off"><svg viewBox="0 0 20 20"><use href="#abcedit"/><text x="6" y="10.500" class="ico-txt ico-grey">abc</text></svg></b>
            <i class="hnd"></i>
            <b><svg><use href="#geosearch"/></svg></b>
            <i class="hnd tight2"></i>
            <b><svg><use href="#python"/></svg></b>
            <i class="hnd"></i>
            <b><svg viewBox="0 0 20 20"><use href="#help"/><text x="8.500" y="14" class="ico-txt ico-q">?</text></svg></b>
            <i class="hnd"></i>
        </div>

        <div class="tb last">
            <i class="hnd"></i>
            <b><svg><use href="#overview"/></svg></b>
        </div>

        <div class="workspace">
            <aside class="docks">
                <section class="dock browser-dock">
                    <div class="dock-title"><span>Browser</span><span class="dock-btns"><svg><use href="#float"/></svg><svg><use href="#closep"/></svg></span></div>
                    <div class="dock-tools browser-tools">
                        <svg><use href="#newdb"/></svg><svg><use href="#refresh"/></svg><svg><use href="#filter"/></svg><svg><use href="#collapse"/></svg><svg><use href="#info"/></svg>
                    </div>
                    <ul class="tree">
                        <li><svg><use href="#star"/></svg>Favorites</li>
                        <li class="kid"><svg><use href="#bm"/></svg>Spatial Bookmarks</li>
                        <li class="kid"><svg><use href="#home"/></svg>Home</li>
                        <li class="kid"><svg><use href="#folder"/></svg>/</li>
                        <li><svg><use href="#gpkg"/></svg>GeoPackage</li>
                        <li><svg><use href="#feather"/></svg>SpatiaLite</li>
                        <li><svg><use href="#pg"/></svg>PostgreSQL</li>
                        <li><svg><use href="#mssql"/></svg>MS SQL Server</li>
                        <li><svg><use href="#globe"/></svg>WMS/WMTS</li>
                        <li><svg><use href="#cube"/></svg>Scenes</li>
                        <li><svg><use href="#sensor"/></svg>SensorThings</li>
                        <li><svg><use href="#vtiles"/></svg>Vector Tiles</li>
                        <li class="kid"><svg><use href="#xyz"/></svg>XYZ Tiles</li>
                        <li><svg><use href="#wcs"/></svg>WCS</li>
                        <li><svg><use href="#wfs"/></svg>WFS / OGC API - Features</li>
                        <li><svg><use href="#arcgis"/></svg>ArcGIS REST Servers</li>
                    </ul>
                </section>
                <div class="splitter"></div>
                <section class="dock layers-dock">
                    <div class="dock-title"><span>Layers</span><span class="dock-btns"><svg><use href="#float"/></svg><svg><use href="#closep"/></svg></span></div>
                    <div class="dock-tools">
                        <svg><use href="#brush"/></svg><svg><use href="#group"/></svg><svg><use href="#eye"/></svg><svg><use href="#filter"/></svg><svg class="faded"><use href="#epsilon"/></svg><i class="arr dim small"></i><svg><use href="#expand"/></svg><svg><use href="#collapse"/></svg><svg><use href="#removel"/></svg>
                    </div>
                    <div class="layer-tree">
                        <div class="layer-row">
                            <i class="twist"></i>
                            <span class="check">&#10003;</span>
                            <svg class="layer-ico"><use href="#raster"/></svg>
                            <span class="layer-name">Total Agriculture (annual)</span>
                        </div>
                        <div class="band">Band 1 (Gray)</div>
                        <div class="legend">
                            <div class="ramp"></div>
                            <div class="ramp-labels"><span>64.488541</span><span>0</span></div>
                        </div>
                    </div>
                </section>
            </aside>

            <section class="map-area">
                <div class="msgbar">
                    <svg class="warn" viewBox="0 0 22 20"><path d="M11 1.500L21 18.500H1z" fill="none" stroke="#e0561b" stroke-width="1.500"/><path d="M11 7v6M11 14.500v1.500" stroke="#e0561b" stroke-width="1.500"/></svg>
                    <span class="msg-text">Open Sans font installation failed</span>
                    <button class="msg-btn">View Error</button>
                    <svg class="msg-close" viewBox="0 0 14 14"><circle cx="7" cy="7" r="7" fill="#2a2410"/><path d="M4.300 4.300l5.400 5.400M9.700 4.300l-5.400 5.400" stroke="#fff" stroke-width="2"/></svg>
                </div>
                <div class="canvas">
                    <svg class="map" viewBox="505 220 1149 664">
                        <defs>
                            <path id="usa" d="M637 363L641 359L1075 359L1076 353L1083 353L1085 362L1107 364L1130 372L1142 371L1165 373L1127 393L1148 388L1150 396L1170 384L1193 383L1183 390L1200 397L1237 393L1250 403L1260 407L1238 406L1210 410L1200 415L1190 427L1192 447L1193 467L1200 473L1210 470L1215 453L1213 430L1218 418L1227 420L1237 407L1263 418L1263 428L1253 438L1272 437L1275 457L1263 472L1277 477L1300 468L1327 458L1330 448L1363 447L1372 443L1371 435L1393 421L1447 418L1463 410L1468 395L1482 383L1505 387L1507 408L1517 420L1517 426L1483 435L1465 443L1457 457L1463 467L1472 468L1471 480L1453 477L1437 480L1410 492L1403 510L1392 517L1390 532L1380 543L1385 567L1385 573L1345 595L1330 603L1300 627L1292 642L1300 670L1313 703L1311 725L1297 733L1283 717L1268 688L1270 670L1250 655L1233 663L1218 652L1168 652L1172 672L1143 670L1128 662L1110 660L1093 662L1068 677L1043 697L1046 718L1037 721L1011 708L1007 693L980 663L957 662L952 673L930 663L923 647L902 630L872 629L872 636L825 636L766 615L731 617L727 603L711 595L679 585L657 553L646 535L630 518L620 497L621 470L616 455L625 420L623 397L614 370L645 372Z"/>
                            <clipPath id="usa-clip"><use href="#usa"/></clipPath>
                            <filter id="soft"><feGaussianBlur stdDeviation="1"/></filter>
                            <filter id="speckle" x="0" y="0" width="100%" height="100%">
                                <feTurbulence type="fractalNoise" baseFrequency="0.11" numOctaves="2" seed="7"/>
                                <feColorMatrix values="0 0 0 0 0.35 0 0 0 0 0.35 0 0 0 0 0.35 0.9 0 0 0 -0.42"/>
                            </filter>
                            <linearGradient id="east-fade" gradientUnits="userSpaceOnUse" x1="800" y1="0" x2="1060" y2="0">
                                <stop offset="0" stop-color="#000"/>
                                <stop offset="1" stop-color="#fff"/>
                            </linearGradient>
                            <mask id="east-mask" maskUnits="userSpaceOnUse" x="600" y="340" width="930" height="410"><rect x="600" y="340" width="930" height="410" fill="url(#east-fade)"/></mask>
                        </defs>
                        <use href="#usa" fill="#020202" class="pixel"/>
                        <g clip-path="url(#usa-clip)">
                            <g mask="url(#east-mask)"><rect x="800" y="350" width="730" height="390" filter="url(#speckle)" opacity="0.22"/></g>
                            <g filter="url(#soft)">
                                <ellipse cx="657" cy="507" rx="2" ry="3" fill="#eee"/>
                                <ellipse cx="661" cy="514" rx="2" ry="4" fill="#bbb"/>
                                <path d="M664 528l5-2 14 20-7 3z" fill="#4a4a4a"/>
                                <ellipse cx="694" cy="560" rx="7" ry="3" fill="#4a4a4a"/>
                                <ellipse cx="703" cy="558" rx="4" ry="5" fill="#999"/>
                                <ellipse cx="769" cy="455" rx="3" ry="3" fill="#ddd"/>
                                <ellipse cx="782" cy="458" rx="6" ry="3" fill="#333"/>
                                <ellipse cx="739" cy="443" rx="3" ry="5" fill="#222"/>
                                <ellipse cx="1025" cy="623" rx="6" ry="5" fill="#161616"/>
                                <ellipse cx="1143" cy="567" rx="5" ry="14" fill="#2a2a2a" transform="rotate(25 1143 567)"/>
                                <ellipse cx="1130" cy="586" rx="6" ry="7" fill="#282828"/>
                                <ellipse cx="1343" cy="578" rx="8" ry="5" fill="#444"/>
                                <ellipse cx="1373" cy="497" rx="6" ry="6" fill="#2a2a2a"/>
                                <ellipse cx="1350" cy="500" rx="6" ry="5" fill="#141414"/>
                                <ellipse cx="1117" cy="651" rx="6" ry="8" fill="#333"/>
                                <ellipse cx="1288" cy="697" rx="7" ry="5" fill="#161616"/>
                                <ellipse cx="1245" cy="450" rx="14" ry="10" fill="#0e0e0e"/>
                                <ellipse cx="958" cy="586" rx="15" ry="10" fill="#242424"/>
                                <rect x="923" y="485" width="23" height="14" fill="#1e1e1e"/>
                                <rect x="971" y="530" width="25" height="10" fill="#1e1e1e"/>
                                <rect x="954" y="549" width="30" height="18" fill="#1c1c1c"/>
                            </g>
                            <rect x="1056" y="445" width="11" height="9" fill="#3c3c3c"/>
                            <rect x="1047" y="466" width="7" height="7" fill="#2a2a2a"/>
                            <rect x="1128" y="475" width="8" height="6" fill="#222"/>
                        </g>
                        <g fill="#fff" class="pixel">
                            <path d="M1368 518l3 1 5 22 2 5-4 0-3-14zM1386 512l5 3-1 2-5-3zM1372 561h8v1h-8zM1370 575l14-6 1 3-14 4zM1418 483l20-3-1 2-19 3z"/>
                        </g>
                        <g fill="#020202" class="pixel">
                            <path d="M680 592h16v2h-16zM694 604h3v2h-3zM710 606h5v5h-5zM1280 742l12-2 18-13-1 3-16 11-12 2zM1466 479h6v2h-6z"/>
                        </g>
                    </svg>
                </div>
            </section>
        </div>

        <footer class="statusbar">
            <div class="locator"><svg><use href="#search"/></svg><span>Type to locate (Ctrl+K)</span></div>
            <div class="status-right">
                <span class="s-label">Coordinate</span>
                <span class="s-box s-coord">15.82°, -111.43°</span>
                <svg class="s-ico s-crs"><use href="#crs"/></svg>
                <span class="s-label s-scale">Scale</span>
                <span class="s-box s-combo">1:13052051<i class="s-drop"></i></span>
                <svg class="s-ico s-lock"><use href="#lock"/></svg>
                <span class="s-label">Magnifier</span>
                <span class="s-box s-spin">100%<i class="spin"></i></span>
                <span class="s-label s-rot">Rotation</span>
                <span class="s-box s-spin">0.0 °<i class="spin"></i></span>
                <span class="s-check">&#10003;</span>
                <span class="s-label">Render</span>
                <svg class="s-ico s-globe"><use href="#globe"/></svg>
                <span class="s-label s-epsg">EPSG:4326</span>
                <svg class="s-ico s-msg"><use href="#msg"/></svg>
            </div>
        </footer>
        <div class="tooltip">Statusbar</div>
    </main>
</body>
</html>
```

FILE: styles.css
```css
:root {
    --ui-font: "DejaVu Sans", "Noto Sans", sans-serif;
    --panel: #f0f0f0;
    --line: #bdbdbd;
}

html, body {
    margin: 0;
    height: 907px;
    overflow: hidden;
}

body {
    background: #5f5f5f;
    display: flex;
    flex-direction: column;
    font-family: var(--ui-font);
    font-size: 10px;
    color: #222;
}

.sheet {
    position: absolute;
    width: 0;
    height: 0;
}

.mono {
    font-family: "Liberation Mono", monospace;
    font-size: 9.8px;
    color: #3c3c3c;
}

.ico-txt {
    font-family: "DejaVu Sans", sans-serif;
}

.ico-a {
    font-size: 8px;
    fill: #555;
}

.ico-grey {
    font-size: 6px;
    fill: #aaa;
}

.ico-ab {
    font-size: 7px;
    fill: #333;
}

.ico-red {
    font-size: 6.5px;
    fill: #e6232a;
}

.ico-q {
    font-family: "DejaVu Serif", serif;
    font-size: 10px;
    fill: #fff;
}

/* jupyter navbar */
.navbar {
    height: 35px;
    flex: none;
    background: linear-gradient(#525252, #4b4b4b);
    display: flex;
    justify-content: space-between;
}

.brand {
    display: flex;
    align-items: center;
    padding-left: 18px;
    gap: 6px;
}

.brand-logo {
    width: 20px;
    height: 26px;
}

.brand-name {
    font-family: "Open Sans", sans-serif;
    font-size: 20px;
    line-height: 28px;
    color: #eee;
    position: relative;
    top: -3px;
}

.nav-links {
    display: flex;
    align-items: center;
    height: 35px;
    font-family: "Liberation Sans", sans-serif;
    font-size: 11.9px;
    font-weight: bold;
    color: #fff;
    padding-right: 7px;
}

.nav-status {
    padding: 0 8px 2px 0;
    letter-spacing: -0.1px;
}

.nav-link {
    height: 35px;
    line-height: 33px;
    border-left: 1px solid #cfcfcf;
    padding: 0 8px;
}

.nav-link + .nav-link {
    padding-right: 0;
}

.desktop {
    position: relative;
    margin-left: 254px;
    width: 1400px;
    height: 872px;
    display: flex;
    flex-direction: column;
    background: var(--panel);
}

/* xfce panel */
.taskbar {
    height: 22px;
    flex: none;
    background: #f6f5f4;
    display: flex;
    align-items: center;
}

.xfce {
    width: 14px;
    height: 14px;
    margin-left: 2px;
}

.apps {
    margin-left: 1px;
    width: 71px;
}

.grip {
    width: 2px;
    height: 10px;
    margin-left: 3px;
    border-left: 2px dotted #888;
}

.task {
    position: relative;
    width: 164px;
    height: 22px;
    margin-left: 4px;
    background: #d7d3ce;
    border-radius: 4px;
    display: flex;
    align-items: center;
    padding-left: 4px;
    box-sizing: border-box;
}

.task-ico {
    width: 14px;
    height: 14px;
    margin-right: 4px;
}

.task-badge {
    position: absolute;
    left: 6px;
    top: 10px;
    width: 13px;
    height: 13px;
    line-height: 13px;
    text-align: center;
    border-radius: 50%;
    background: #23282b;
    color: #eee;
    font-size: 7.500px;
}

.tray {
    margin-left: auto;
    display: flex;
    height: 22px;
}

.pager-on {
    width: 33px;
    box-sizing: border-box;
    background: #d4d0c9;
    border: 1px solid #5a5a5a;
    display: flex;
    align-items: center;
    justify-content: center;
}

.pager-ico {
    width: 15px;
    height: 15px;
}

.pager {
    width: 34px;
    border-right: 1px solid #d8d8d4;
    background: #acaca8;
}

.pager:nth-of-type(4) {
    border-right: 0;
    width: 35px;
}

.clock-area {
    width: 182px;
    background: #f6f5f4;
    display: flex;
    align-items: center;
    white-space: nowrap;
}

.speaker {
    margin-left: 11px;
    margin-right: 16px;
    width: 11px;
    height: 10px;
    flex: none;
}

.clock {
    font-size: 9.6px;
}

/* window title */
.titlebar {
    height: 21px;
    flex: none;
    background: linear-gradient(#b1afaa, #d6d4d0 60%, #ecebe9);
    display: flex;
    align-items: center;
    position: relative;
}

.win-ico {
    width: 18px;
    height: 18px;
    margin-left: 1px;
}

.win-title {
    margin-left: 593px;
    font-size: 8.35px;
    font-weight: bold;
    color: #555;
}

.win-btns {
    margin-left: auto;
    display: flex;
    gap: 9px;
    padding-right: 4px;
}

.win-btns svg {
    width: 10px;
    height: 10px;
}

.menubar {
    height: 15px;
    flex: none;
    display: flex;
    gap: 12px;
    padding-left: 8px;
    align-items: center;
    background: #f0f0f0;
    border-bottom: 1px solid #dcdcdc;
    font-size: 10.1px;
}

/* toolbars */
.tb {
    height: 32px;
    flex: none;
    box-sizing: border-box;
    display: flex;
    align-items: center;
    background: linear-gradient(#fafafa, #ececec);
    border-bottom: 1px solid #c4c4c4;
    padding-left: 3px;
}

.tb.last {
    height: 33px;
    border-bottom-color: #b5b5b5;
}

.tb b {
    width: 27.5px;
    height: 26px;
    flex: none;
    display: flex;
    align-items: center;
    justify-content: center;
    box-sizing: border-box;
}

.tb b svg {
    width: 20px;
    height: 20px;
}

.tb b.on {
    background: #dcdcdc;
    border: 1px solid #b4b4b4;
    border-radius: 2px;
}

.tb b.off svg {
    opacity: 0.4;
    filter: grayscale(0.7);
}

.hnd {
    width: 13px;
    height: 18px;
    flex: none;
    box-sizing: border-box;
    background: radial-gradient(circle, #c4c4c4 0.7px, transparent 1px) 3px 0 / 3px 3px;
    background-clip: content-box;
    padding: 0 4px;
}

.hnd:first-child {
    width: 8px;
    padding: 0;
}

.hnd.thin {
    width: 10px;
    padding: 0 3px;
    margin-left: 2px;
}

.hnd.tight {
    width: 10.5px;
    padding: 0 3px;
}

.hnd.tight2 {
    width: 12px;
}

.vsep {
    width: 1px;
    height: 20px;
    flex: none;
    margin: 0 3px;
    background: #c8c8c8;
}

.arr {
    width: 10.5px;
    flex: none;
    height: 5px;
    position: relative;
}

.arr::before {
    content: "";
    position: absolute;
    left: 1px;
    top: 0;
    border: 3.500px solid transparent;
    border-top: 4px solid #333;
    border-bottom: 0;
}

.arr.dim::before {
    border-top-color: #c4c4c4;
}

/* docks */
.workspace {
    height: 695px;
    flex: none;
    display: flex;
}

.docks {
    width: 250px;
    flex: none;
    display: flex;
    flex-direction: column;
}

.dock-title {
    height: 17px;
    flex: none;
    display: flex;
    justify-content: space-between;
    align-items: center;
    padding: 0 7px 0 3px;
    color: #333;
}

.dock-btns {
    display: flex;
    gap: 1px;
}

.dock-btns svg {
    width: 10px;
    height: 10px;
}

.dock-tools {
    height: 24px;
    flex: none;
    display: flex;
    align-items: center;
    gap: 7px;
    padding-left: 5px;
    box-sizing: border-box;
}

.dock-tools.browser-tools {
    height: 25px;
    padding-bottom: 2px;
}

.dock-tools svg {
    width: 14px;
    height: 14px;
}

.dock-tools .faded {
    opacity: 0.8;
}

.arr.small {
    width: 8px;
    margin-left: -6px;
    margin-right: -2px;
}

.browser-dock {
    height: 351px;
    flex: none;
    display: flex;
    flex-direction: column;
}

.splitter {
    height: 5px;
    flex: none;
    background: radial-gradient(circle, #bbb 0.6px, transparent 1px) 118px 1px / 3px 3px repeat-x;
}

.layers-dock {
    flex: 1;
    display: flex;
    flex-direction: column;
    min-height: 0;
}

.tree {
    list-style: none;
    margin: 0 5px 0 1px;
    padding: 1px 0 0;
    flex: 1;
    background: #fff;
    border: 1px solid var(--line);
}

.tree li {
    height: 15px;
    padding-left: 15px;
    display: flex;
    align-items: center;
    gap: 4px;
    position: relative;
    white-space: nowrap;
}

.tree li svg {
    width: 14px;
    height: 14px;
}

.tree li.kid::before {
    content: "";
    position: absolute;
    left: 4px;
    top: 4.500px;
    border: 3px solid transparent;
    border-left: 4px solid #555;
    border-right: 0;
}

.layer-tree {
    flex: 1;
    margin: 0 5px 1px 1px;
    background: #fff;
    border: 1px solid var(--line);
}

.layer-row {
    height: 15px;
    background: #2e8bc9;
    display: flex;
    align-items: center;
    color: #fff;
    position: relative;
}

.twist {
    width: 0;
    margin-left: 6px;
    border: 4px solid transparent;
    border-top: 4px solid #1d3d55;
    border-bottom: 0;
}

.check {
    width: 12px;
    height: 12px;
    line-height: 12px;
    margin-left: 5px;
    background: #fff;
    border: 1px solid #888;
    box-sizing: border-box;
    color: #111;
    font-size: 10px;
    font-weight: bold;
    text-align: center;
}

.layer-ico {
    width: 13px;
    height: 13px;
    margin-left: 5px;
}

.layer-name {
    margin-left: 5px;
    text-decoration: underline;
    white-space: nowrap;
}

.band {
    height: 14px;
    line-height: 14px;
    padding-left: 35px;
}

.legend {
    display: flex;
    padding-left: 35px;
}

.ramp {
    width: 13px;
    height: 79px;
    background: linear-gradient(#fff, #000);
}

.ramp-labels {
    height: 79px;
    margin-left: 6px;
    display: flex;
    flex-direction: column;
    justify-content: space-between;
    line-height: 13px;
}

/* map */
.map-area {
    flex: 1;
    display: flex;
    flex-direction: column;
    min-width: 0;
    padding-top: 1px;
}

.msgbar {
    height: 28px;
    flex: none;
    box-sizing: border-box;
    background: #ffc800;
    border-top: 1px solid #e9b800;
    border-bottom: 1px solid #e9b800;
    display: flex;
    align-items: center;
    color: #222;
}

.warn {
    width: 22px;
    height: 20px;
    margin-left: 9px;
}

.msg-text {
    margin-left: 5px;
}

.msg-btn {
    margin-left: auto;
    width: 67px;
    height: 19px;
    padding: 0;
    background: linear-gradient(#fdfdfd, #f0f0f0);
    border: 1px solid #d9c27a;
    border-radius: 2px;
    font: 10px var(--ui-font);
    color: #222;
}

.msg-close {
    width: 15px;
    height: 15px;
    margin: 0 20px 0 25px;
}

.canvas {
    flex: 1;
    min-height: 0;
    background: #fff;
    border-left: 1px solid var(--line);
    border-bottom: 1px solid var(--line);
}

.map {
    display: block;
    width: 100%;
    height: 100%;
}

.pixel {
    shape-rendering: crispEdges;
}

/* status bar */
.statusbar {
    flex: 1;
    display: flex;
    align-items: center;
    background: #eeeeee;
    font-size: 8.3px;
    min-height: 0;
}

.locator {
    width: 207px;
    height: 18px;
    margin-left: 3px;
    box-sizing: border-box;
    background: #fff;
    border: 1px solid #c4c4c4;
    border-radius: 2px;
    display: flex;
    align-items: center;
    gap: 6px;
    padding-left: 6px;
    font-size: 10px;
    color: #8a8a8a;
}

.locator svg {
    width: 12px;
    height: 12px;
}

.status-right {
    margin-left: 517px;
    display: flex;
    align-items: center;
    height: 100%;
    white-space: nowrap;
    box-sizing: border-box;
    padding-top: 1px;
}

.s-label {
    font-family: "DejaVu Sans Condensed", "Liberation Sans", sans-serif;
    color: #444;
}

.s-box {
    height: 17px;
    line-height: 15px;
    box-sizing: border-box;
    background: #fff;
    border: 1px solid #c4c4c4;
    border-radius: 2px;
    font-family: "DejaVu Sans Condensed", "Liberation Sans", sans-serif;
    color: #333;
    padding-left: 3px;
    position: relative;
}

.s-coord {
    width: 76px;
    margin-left: 4px;
    text-align: center;
    padding: 0;
}

.s-ico {
    width: 13px;
    height: 13px;
    flex: none;
}

.s-crs {
    margin: 0 10px 0 5px;
}

.s-combo {
    width: 81px;
    margin-left: 3px;
}

.s-drop {
    position: absolute;
    right: 0;
    top: 0;
    bottom: 0;
    width: 16px;
    border-left: 1px solid #ddd;
    background: #f0f0f0;
}

.s-drop::after {
    content: "";
    position: absolute;
    left: 5px;
    top: 6px;
    border: 3px solid transparent;
    border-top: 3px solid #555;
    border-bottom: 0;
}

.s-lock {
    margin: 0 7px;
}

.s-spin {
    width: 77px;
    margin-left: 2px;
}

.spin {
    position: absolute;
    right: 0;
    top: 0;
    bottom: 0;
    width: 11px;
    border-left: 1px solid #ddd;
    background: #f0f0f0;
}

.spin::before, .spin::after {
    content: "";
    position: absolute;
    left: 2px;
    border: 3px solid transparent;
}

.spin::before {
    top: 1px;
    border-top: 0;
    border-bottom: 4px solid #555;
}

.spin::after {
    bottom: 1px;
    border-bottom: 0;
    border-top: 4px solid #555;
}

.s-rot {
    margin: 0 8px 0 6px;
}

.s-check {
    width: 11px;
    height: 12px;
    line-height: 11px;
    margin: 0 6px 0 5px;
    box-sizing: border-box;
    background: #fff;
    border: 1px solid #888;
    text-align: center;
    font-size: 9px;
    font-weight: bold;
    color: #111;
}

.s-globe {
    margin: 0 4px 0 10px;
}

.s-msg {
    margin-left: 19px;
}

.tooltip {
    position: absolute;
    left: 408px;
    top: 849px;
    width: 56px;
    height: 18px;
    box-sizing: border-box;
    line-height: 16px;
    text-align: center;
    background: #ffffdc;
    border: 1px solid #111;
    font-size: 10px;
    color: #222;
}
```
